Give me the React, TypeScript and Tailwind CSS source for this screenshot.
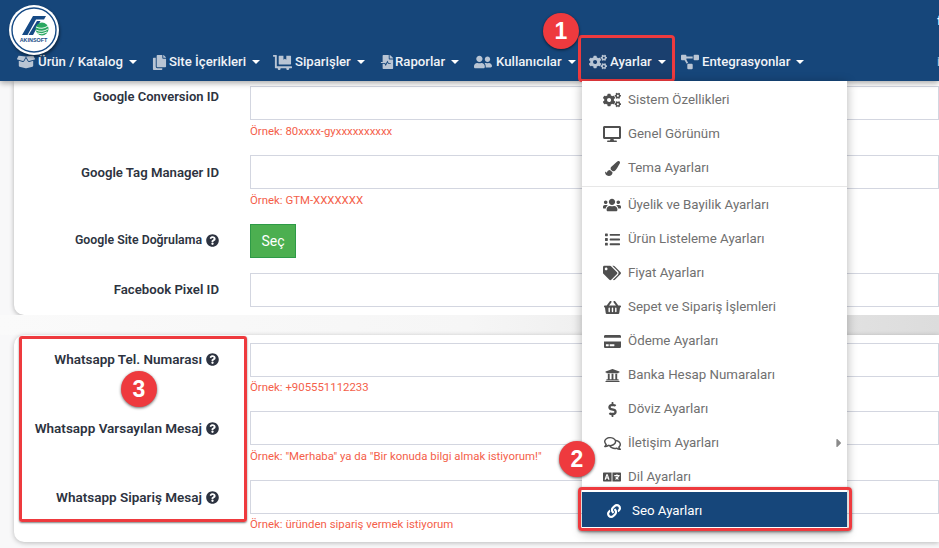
import React from 'react';
import {
  FaBoxOpen, FaCopy, FaDollyFlatbed, FaFileMedicalAlt, FaUserFriends, FaCogs, FaProjectDiagram,
  FaDesktop, FaPaintBrush, FaUsers, FaList, FaTags, FaShoppingBasket, FaCreditCard, FaUniversity,
  FaDollarSign, FaRegComments, FaLanguage, FaLink, FaQuestionCircle, FaCaretRight,
} from 'react-icons/fa';

const navItems = [
  { label: 'Ürün / Katalog', icon: FaBoxOpen, width: 'w-[135px]', slot: 'w-[21px]', size: 'text-[18px]' },
  { label: 'Site İçerikleri', icon: FaCopy, width: 'w-[121px]', slot: 'w-[17px]', size: 'text-[15px]' },
  { label: 'Siparişler', icon: FaDollyFlatbed, width: 'w-[107px]', slot: 'w-[22px]', size: 'text-[19px]' },
  { label: 'Raporlar', icon: FaFileMedicalAlt, width: 'w-[94px]', slot: 'w-[15px]', size: 'text-[14px]' },
  { label: 'Kullanıcılar', icon: FaUserFriends, width: 'w-[115px]', slot: 'w-[22px]', size: 'text-[18px]' },
  { label: 'Ayarlar', icon: FaCogs, width: 'w-[92px]', slot: 'w-[21px]', size: 'text-[18px]' },
  { label: 'Entegrasyonlar', icon: FaProjectDiagram, width: 'w-[256px]', slot: 'w-[21px]', size: 'text-[18px]' },
];

const menuTop = [
  { label: 'Sistem Özellikleri', icon: FaCogs, size: 'text-[18px]' },
  { label: 'Genel Görünüm', icon: FaDesktop, size: 'text-[18px]' },
  { label: 'Tema Ayarları', icon: FaPaintBrush, size: 'text-[15px]' },
];

const menuBottom = [
  { label: 'Üyelik ve Bayilik Ayarları', icon: FaUsers, size: 'text-[18px]' },
  { label: 'Ürün Listeleme Ayarları', icon: FaList, size: 'text-[15px]' },
  { label: 'Fiyat Ayarları', icon: FaTags, size: 'text-[18px]' },
  { label: 'Sepet ve Sipariş İşlemleri', icon: FaShoppingBasket, size: 'text-[17px]' },
  { label: 'Ödeme Ayarları', icon: FaCreditCard, size: 'text-[17px]' },
  { label: 'Banka Hesap Numaraları', icon: FaUniversity, size: 'text-[15px]' },
  { label: 'Döviz Ayarları', icon: FaDollarSign, size: 'text-[15px]' },
  { label: 'İletişim Ayarları', icon: FaRegComments, size: 'text-[17px]', sub: true },
  { label: 'Dil Ayarları', icon: FaLanguage, size: 'text-[18px]' },
];

function Caret() {
  return <span className="ml-[6px] inline-block border-x-[4px] border-t-[4px] border-x-transparent border-t-white" />;
}

function Badge({ n, className }: { n: number; className: string }) {
  return (
    <div className={`absolute flex h-[36px] w-[36px] items-center justify-center rounded-full bg-[#ee3a3e] text-[23px] font-bold text-white shadow-[0_1px_3px_rgba(0,0,0,0.6)] ${className}`} style={{ fontFamily: '"Liberation Sans", sans-serif' }}>
      {n}
    </div>
  );
}

interface FormRowProps {
  label: string;
  help?: boolean;
  hint?: string;
  h: string;
  labelClass: string;
  hintClass?: string;
}

function FormRow({ label, help, hint, h, labelClass, hintClass = 'mt-[3px]' }: FormRowProps) {
  return (
    <div className={`flex ${h}`}>
      <div className={`flex h-[22px] w-[205px] shrink-0 items-center justify-end gap-[4px] font-semibold text-[#2d3340] ${labelClass}`}>
        <span>{label}</span>
        {help && <FaQuestionCircle className="text-[13px] text-[#2d3340]" />}
      </div>
      <div className="ml-[31px] flex-1">
        <div className="h-[34px] border border-[#d3d6e0] bg-white" />
        {hint && <div className={`text-[11.4px] leading-[16px] text-[#f4604a] ${hintClass}`}>{hint}</div>}
      </div>
    </div>
  );
}

function Logo() {
  return (
    <div className="absolute left-[9px] top-[5px] z-30 h-[50px] w-[50px] rounded-full bg-white shadow-[1px_2px_3px_rgba(0,0,0,0.45)]">
      <svg viewBox="0 0 50 50" className="h-[50px] w-[50px]">
        <circle cx="25" cy="25" r="22" fill="none" stroke="#164a85" strokeWidth="1.4" />
        <path d="M13 30 L24 11 H37 L35 14.5 H27 L18.5 30 Z" fill="#164a85" />
        <path d="M19.5 30 L28 16 H31.5 L24 30 Z" fill="#164a85" />
        <circle cx="33" cy="24" r="6.5" fill="#2aa760" />
        <path d="M27 22 Q33 25 39 21 M27 25 Q33 28 39 24 M28 28 Q33 30 38 27" stroke="#fff" strokeWidth="0.9" fill="none" />
        <text x="24.5" y="36.5" textAnchor="middle" fontSize="5.4" fontWeight="700" fill="#164a85" fontFamily="Liberation Sans, sans-serif">AKINSOFT</text>
      </svg>
    </div>
  );
}

function App() {
  return (
    <div className="relative h-[548px] w-[939px] overflow-hidden bg-[#f8f8f9]" style={{ fontFamily: 'Roboto, "Noto Sans", sans-serif' }}>
      <header className="relative z-10 flex h-[81px] items-end bg-[#16467a] pb-[9px] pl-[17px] shadow-[0_2px_6px_rgba(0,0,0,0.35)]">
        {/* aktif menu zemini */}
        <div className="absolute left-[581px] top-[38px] h-[43px] w-[92px] bg-[#1a3f6e]" />
        {navItems.map((item) => {
          const Icon = item.icon;
          return (
            <div key={item.label} className={`relative flex h-[20px] shrink-0 items-center text-[13.2px] font-medium text-[#f0f3f7] ${item.width}`}>
              <span className={`flex shrink-0 ${item.slot}`}><Icon className={`${item.size} text-[#b9c5d4]`} /></span>
              <span>{item.label}</span>
              <Caret />
            </div>
          );
        })}
        <span className="text-[13.2px] font-medium text-[#b9c5d4]">i</span>
        <span className="absolute left-[937px] top-[11px] text-[13.2px] font-medium text-white">f</span>
      </header>

      <main>
        <section className="ml-[14px] h-[234px] rounded-bl-[10px] bg-white pt-[5px] shadow-[0_1px_5px_rgba(0,0,0,0.3)]">
          <FormRow label="Google Conversion ID" hint="Örnek: 80xxxx-gyxxxxxxxxxx" h="h-[69px]" labelClass="text-[13px]" />
          <FormRow label="Google Tag Manager ID" hint="Örnek: GTM-XXXXXXX" h="h-[69px]" labelClass="mt-[7px] text-[13.2px]" />
          <div className="flex h-[49px]">
            <div className="mt-[5px] flex h-[22px] w-[205px] shrink-0 items-center justify-end gap-[4px] text-[12.3px] font-semibold text-[#2d3340]">
              <span>Google Site Doğrulama</span>
              <FaQuestionCircle className="text-[13px]" />
            </div>
            <div className="ml-[31px] flex h-[34px] w-[46px] items-center justify-center border border-[#2e9a47] bg-[#4caf50] text-[14px] text-white">Seç</div>
          </div>
          <FormRow label="Facebook Pixel ID" h="h-[34px]" labelClass="mt-[6px] text-[13.2px]" />
        </section>

        <div className="h-[20px] bg-gradient-to-r from-[#fafafa] via-[#f6f6f6] to-[#dcdcdc]" />

        <section className="ml-[14px] h-[207px] rounded-l-[10px] bg-white pt-[8px] shadow-[0_1px_5px_rgba(0,0,0,0.25)]">
          <FormRow label="Whatsapp Tel. Numarası" help hint="Örnek: +905551112233" h="h-[68px]" labelClass="mt-[5px] text-[13.5px]" hintClass="mt-[2px]" />
          <FormRow label="Whatsapp Varsayılan Mesaj" help hint={'Örnek: "Merhaba" ya da "Bir konuda bilgi almak istiyorum!"'} h="h-[69px]" labelClass="mt-[6px] text-[13.5px]" />
          <FormRow label="Whatsapp Sipariş Mesaj" help hint="Örnek: üründen sipariş vermek istiyorum" h="h-[60px]" labelClass="mt-[6px] text-[13.5px]" hintClass="mt-[2px]" />
        </section>
      </main>

      {/* menu acik halde, sayfanin ustunde duruyor */}
      <div className="absolute left-[582px] top-[81px] z-20 w-[265px] bg-white pt-[2px] text-[13.3px] text-[#707070] shadow-[0_2px_10px_rgba(0,0,0,0.3)]">
        {menuTop.map((m) => {
          const Icon = m.icon;
          return (
            <div key={m.label} className="flex h-[34px] items-center pl-[21px]">
              <span className="flex w-[18px] justify-center"><Icon className={`${m.size} text-[#4f4f4f]`} /></span>
              <span className="ml-[7px]">{m.label}</span>
            </div>
          );
        })}
        <div className="mt-px mb-px h-px bg-[#e7e7e7]" />
        {menuBottom.map((m) => {
          const Icon = m.icon;
          return (
            <div key={m.label} className="relative flex h-[34px] items-center pl-[21px]">
              <span className="flex w-[18px] justify-center"><Icon className={`${m.size} text-[#4f4f4f]`} /></span>
              <span className="ml-[7px]">{m.label}</span>
              {m.sub && <FaCaretRight className="absolute right-[1px] text-[14px] text-[#8a8a8a]" />}
            </div>
          );
        })}
        <div className="-mt-[2px] flex h-[35px] items-center bg-[#16467a] pl-[25px] pt-[2px] text-white">
          <FaLink className="text-[14px]" />
          <span className="ml-[11px]">Seo Ayarları</span>
        </div>
        <div className="h-[4px]" />
      </div>

      <div className="absolute left-[578px] top-[35px] z-[11] h-[47px] w-[97px] rounded-[4px] border-[3px] border-[#ee3a3e]" />
      <div className="absolute left-[578px] top-[487px] z-30 h-[44px] w-[274px] rounded-[4px] border-[3px] border-[#ee3a3e] shadow-[0_1px_3px_rgba(0,0,0,0.5)]" />
      <div className="absolute left-[19px] top-[336px] z-30 h-[186px] w-[228px] rounded-[3px] border-[3px] border-[#ee3a3e] shadow-[0_1px_2px_rgba(0,0,0,0.5)]" />

      <Logo />
      <Badge n={1} className="left-[543px] top-[13px] z-30" />
      <Badge n={2} className="left-[559px] top-[441px] z-30" />
      <Badge n={3} className="left-[121px] top-[371px] z-30" />
    </div>
  );
}

export default App;
